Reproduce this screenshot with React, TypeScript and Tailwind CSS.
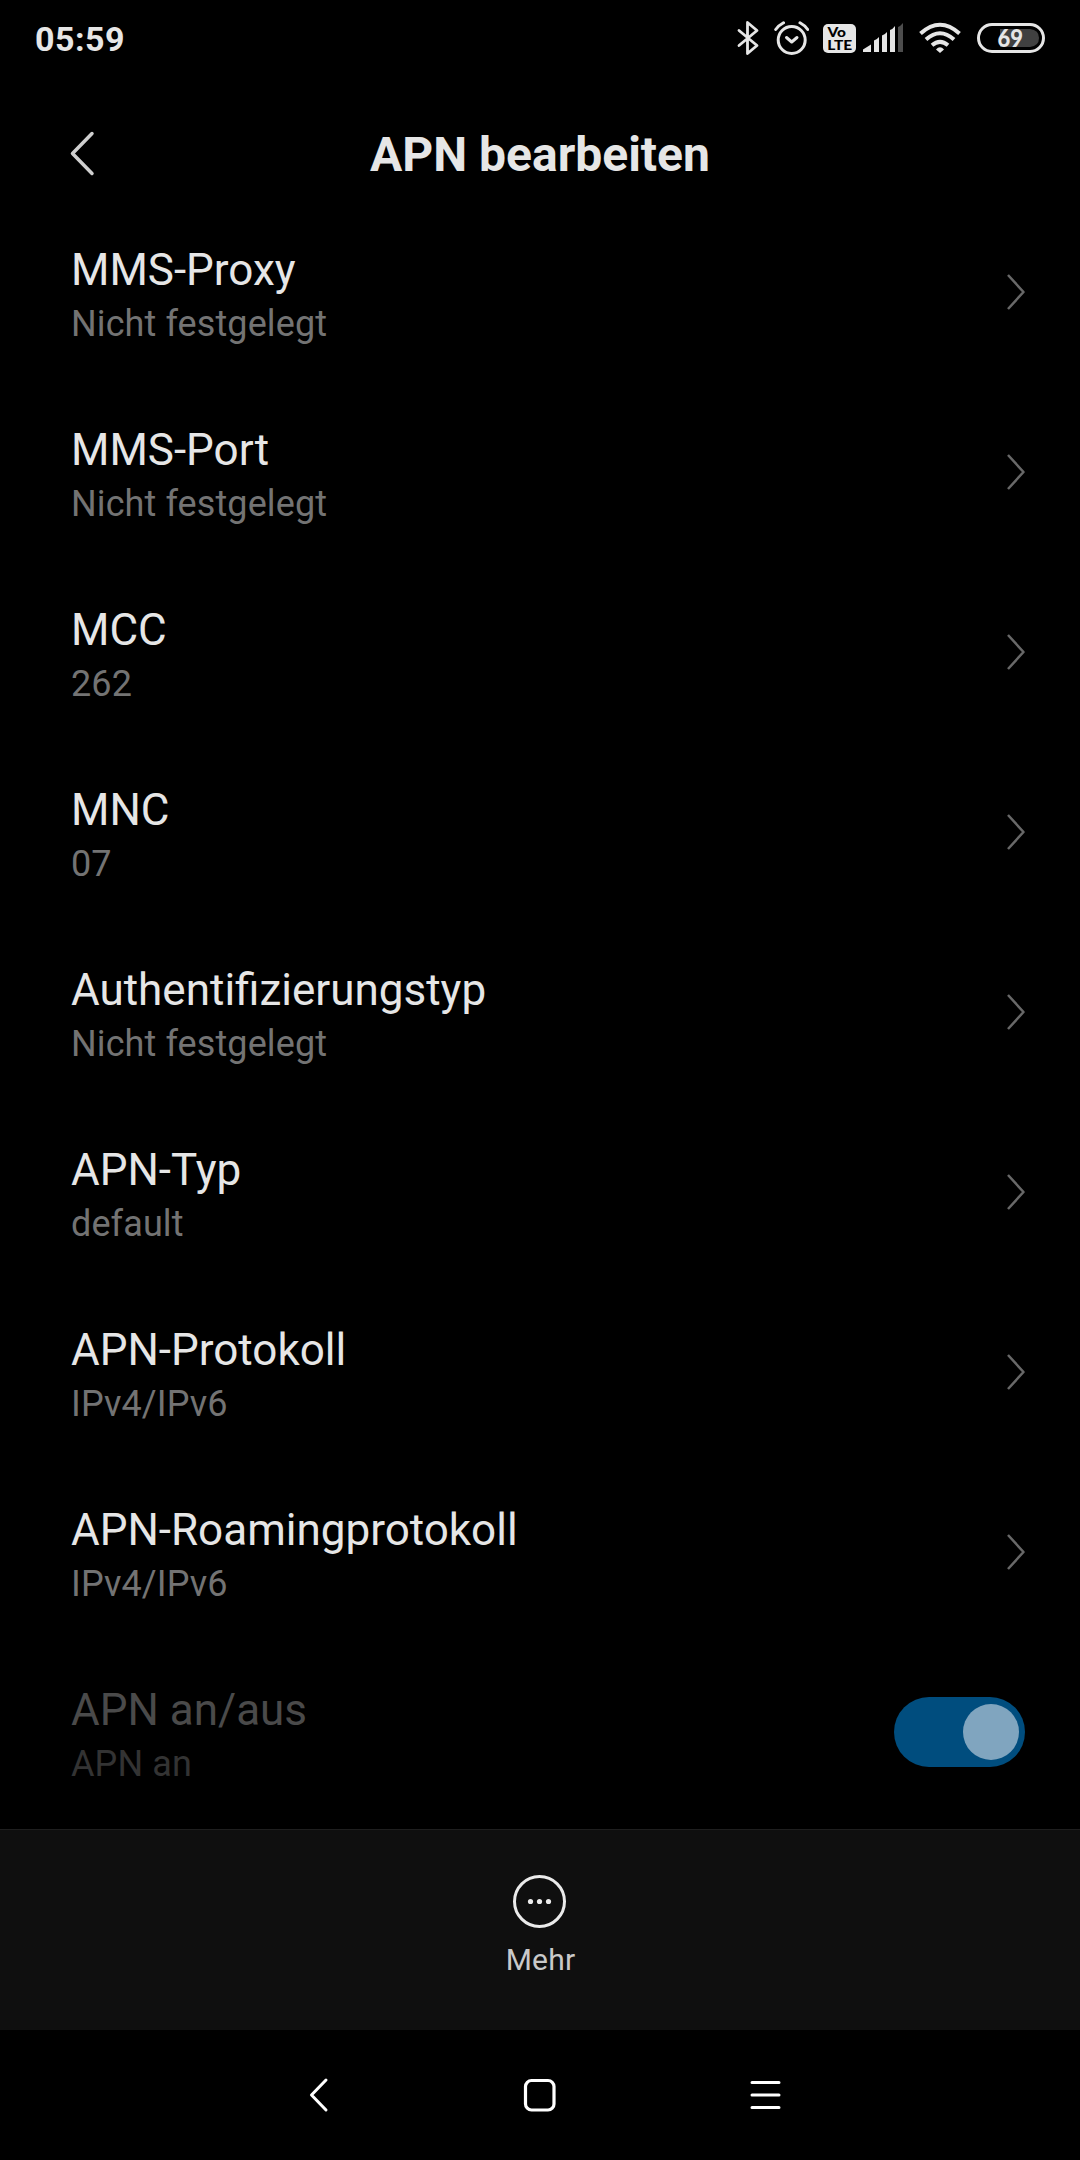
import { clsx } from "clsx";

const entries = [
  { title: "MMS-Proxy", value: "Nicht festgelegt" },
  { title: "MMS-Port", value: "Nicht festgelegt" },
  { title: "MCC", value: "262" },
  { title: "MNC", value: "07" },
  { title: "Authentifizierungstyp", value: "Nicht festgelegt" },
  { title: "APN-Typ", value: "default" },
  { title: "APN-Protokoll", value: "IPv4/IPv6" },
  { title: "APN-Roamingprotokoll", value: "IPv4/IPv6" },
];

function StatusBar() {
  return (
    <div className="flex h-[78px] items-start justify-between pl-[35px] pr-[35px] text-[#e6e6e6]">
      <span className="mt-[19px] text-[34px] leading-[40px] font-bold tracking-[0.5px]">05:59</span>

      <div className="mt-[18px] flex h-10 items-start">
        {/* Bluetooth */}
        <svg className="h-10 w-[26px]" viewBox="0 0 26 40" fill="none" stroke="currentColor" strokeWidth="2.8" strokeLinecap="round" strokeLinejoin="round">
          <path d="M3 12.500 21 27.500 11.500 35.500V4.500L21 12.500 3 27.500" />
        </svg>

        {/* Alarm */}
        <svg className="ml-[11px] h-10 w-[36px]" viewBox="0 0 36 40" fill="none" stroke="currentColor" strokeWidth="3">
          <circle cx="18.700" cy="22" r="13.500" />
          <path d="M13.500 19.500 18.700 24 24 19.500" strokeLinecap="round" strokeLinejoin="round" />
          <path d="M2.700 11.500Q5.500 7.500 10.500 4.800M34.700 11.500Q32 7.500 27 4.800" strokeLinecap="round" />
        </svg>

        {/* VoLTE badge */}
        <svg className="ml-[14px] h-10 w-[33px]" viewBox="0 0 33 40">
          <rect x="0" y="6" width="33" height="29" rx="5" fill="currentColor" />
          <g className="font-[Lato,sans-serif] font-black" fill="#000">
            <text x="4.500" y="18.500" fontSize="13" textLength="18.500" lengthAdjust="spacingAndGlyphs">Vo</text>
            <text x="4.200" y="31.500" fontSize="13.500" textLength="25" lengthAdjust="spacingAndGlyphs">LTE</text>
          </g>
        </svg>

        {/* Mobile signal */}
        <svg className="ml-[7px] h-10 w-[40px]" viewBox="0 0 40 40" fill="currentColor">
          <path d="M0 34V31.500L8 26.500V34ZM11 34V22.500Q13.500 22 16 19V34ZM19 34V17.500Q21.500 17 24 14V34ZM27 34V12Q29.500 11.500 32 8V34Z" />
          <path d="M35 34V9Q37.500 8 40 5V34Z" fill="#4d4d4d" />
        </svg>

        {/* Wi-Fi */}
        <svg className="ml-[16px] h-10 w-[42px]" viewBox="0 0 42 40" fill="none" stroke="currentColor" strokeWidth="4">
          <path d="M1.500 15.500Q21-2 40.500 15.500M7 21.500Q21 9 35 21.500M13 27.200Q21 20.500 29 27.200" />
          <path d="M17 31.500Q21 27 25 31.500L21 35Z" fill="currentColor" stroke="none" />
        </svg>

        {/* Battery */}
        <svg className="ml-[16px] h-10 w-[68px]" viewBox="0 0 68 40">
          <rect x="1.500" y="6.500" width="65" height="27" rx="13.500" fill="none" stroke="currentColor" strokeWidth="3" />
          <path d="M23 11H53Q62 12 62 20T53 29H23Z" fill="#404040" />
          <text className="font-[Lato,sans-serif] font-black" x="20.500" y="29" fontSize="25" textLength="25.500" lengthAdjust="spacingAndGlyphs" fill="currentColor">69</text>
        </svg>
      </div>
    </div>
  );
}

function Header() {
  return (
    <header className="grid h-[123px] grid-cols-[1fr_auto_1fr] items-start">
      <svg className="ml-[68px] mt-[52px] h-[46px] w-[28px]" viewBox="0 0 28 46" fill="none" stroke="#cfcfcf" strokeWidth="3.500" strokeLinecap="round" strokeLinejoin="round">
        <path d="M24 3.500 4.500 23.500 24 43.500" />
      </svg>
      <h1 className="mt-[49px] text-[48px] leading-[56px] font-bold text-[#e6e6e6]">APN bearbeiten</h1>
    </header>
  );
}

function Row({ title, value, disabled = false, children }: {
  title: string;
  value: string;
  disabled?: boolean;
  children: React.ReactNode;
}) {
  return (
    <li className="flex h-[180px] items-center justify-between pl-[71px] pr-[55px]">
      <div className="h-full pt-[43px]">
        <p className={clsx("text-[44px] leading-[52px]", disabled ? "text-[#4a4a4a]" : "text-[#e6e6e6]")}>{title}</p>
        <p className={clsx("mt-1 text-[36px] leading-[48px] tracking-[0.1px]", disabled ? "text-[#333333]" : "text-[#737373]")}>{value}</p>
      </div>
      {children}
    </li>
  );
}

function Chevron() {
  return (
    <svg className="mt-[2px] h-[38px] w-[19px]" viewBox="0 0 19 38" fill="none" stroke="#686868" strokeWidth="2.500" strokeLinejoin="round">
      <path d="M2 2 17.500 19 2 36" />
    </svg>
  );
}

function Toggle() {
  return (
    <span className="mt-[2px] flex h-[70px] w-[131px] items-center justify-end rounded-full bg-[#004d7e] pr-[6px]">
      <span className="size-14 rounded-full bg-[#80a5bf]" />
    </span>
  );
}

export default function App() {
  return (
    <div className="flex h-[2160px] w-[1080px] flex-col overflow-hidden bg-black font-[Roboto,sans-serif]">
      <StatusBar />
      <Header />

      <ul className="flex-1">
        {entries.map((entry) => (
          <Row key={entry.title} title={entry.title} value={entry.value}>
            <Chevron />
          </Row>
        ))}
        <Row title="APN an/aus" value="APN an" disabled>
          <Toggle />
        </Row>
      </ul>

      {/* Action bar */}
      <div className="flex h-[201px] flex-col items-center border-t border-[#1f1f1f] bg-[#0f0f0f]">
        <svg className="mt-[44px] h-[56px] w-[56px]" viewBox="0 0 56 56">
          <circle cx="27.500" cy="27.500" r="25" fill="none" stroke="#ebebeb" strokeWidth="3" />
          <g fill="#ebebeb">
            <circle cx="18.500" cy="27.500" r="2.600" />
            <circle cx="27.500" cy="27.500" r="2.600" />
            <circle cx="36.500" cy="27.500" r="2.600" />
          </g>
        </svg>
        <span className="mt-[12px] pl-px text-[30px] leading-[36px] tracking-[0.2px] text-[#c9c9c9]">Mehr</span>
      </div>

      {/* System navigation */}
      <nav className="flex h-[130px] items-start justify-center gap-[190px] pt-[45px]">
        <svg className="h-10 w-[36px]" viewBox="0 0 36 40" fill="none" stroke="#fff" strokeWidth="3" strokeLinecap="round" strokeLinejoin="round">
          <path d="M30 5 15.500 20 30 35" />
        </svg>
        <svg className="h-10 w-[36px]" viewBox="0 0 36 40" fill="none" stroke="#fff" strokeWidth="3.200">
          <rect x="3.500" y="5.500" width="28.500" height="29.500" rx="6" />
        </svg>
        <svg className="h-10 w-[36px]" viewBox="0 0 36 40" fill="none" stroke="#fff" strokeWidth="3" strokeLinecap="round">
          <path d="M4 7.500H31M4 20H31M4 32.500H31" />
        </svg>
      </nav>
    </div>
  );
}
